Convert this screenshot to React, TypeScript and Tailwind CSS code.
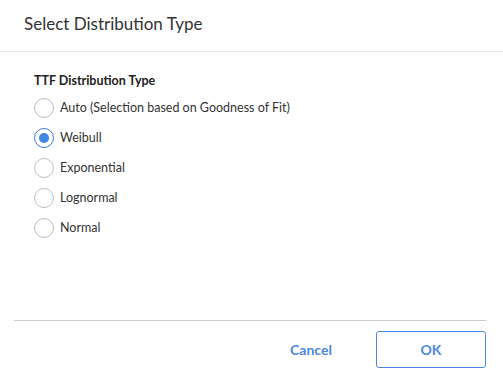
import React from "react";

const options = [
  "Auto (Selection based on Goodness of Fit)",
  "Weibull",
  "Exponential",
  "Lognormal",
  "Normal",
];

export default function App() {
  const selected = 1;
  return (
    <div className="w-[503px] h-[377px] bg-white flex flex-col text-[#333333]" style={{ fontFamily: "Lato, 'Noto Sans', sans-serif" }}>
      <div className="h-[52px] border-b border-[#e6e6e6] flex items-center px-[24px] pb-[4px]">
        <h1 className="text-[17px] text-[#333333]">Select Distribution Type</h1>
      </div>
      <div className="flex-1 px-[34px] pt-[20px]">
        <div className="text-[12.5px] font-bold text-[#222222] h-[18px] leading-[18px]">TTF Distribution Type</div>
        <div className="flex flex-col mt-[3px]">
          {options.map((o, i) => (
            <div key={o} className="flex items-center h-[30px] gap-[6px]">
              {i === selected ? (
                <span className="w-[20px] h-[20px] rounded-full border border-[#3a7bd5] flex items-center justify-center">
                  <span className="w-[10px] h-[10px] rounded-full bg-[#3f86e6]" />
                </span>
              ) : (
                <span className="w-[20px] h-[20px] rounded-full border border-[#bdbdbd]" />
              )}
              <span className="text-[12.5px] text-[#333333]">{o}</span>
            </div>
          ))}
        </div>
      </div>
      <div className="ml-[14px] mr-[17px] border-t border-[#cccccc] h-[57px] flex items-center justify-end">
        <button className="text-[14px] font-bold text-[#4b87e0] w-[110px] h-[37px] mr-[10px]">Cancel</button>
        <button className="text-[14px] font-bold text-[#4b87e0] w-[110px] h-[37px] border border-[#4b87e0] rounded-[3px]">OK</button>
      </div>
    </div>
  );
}
